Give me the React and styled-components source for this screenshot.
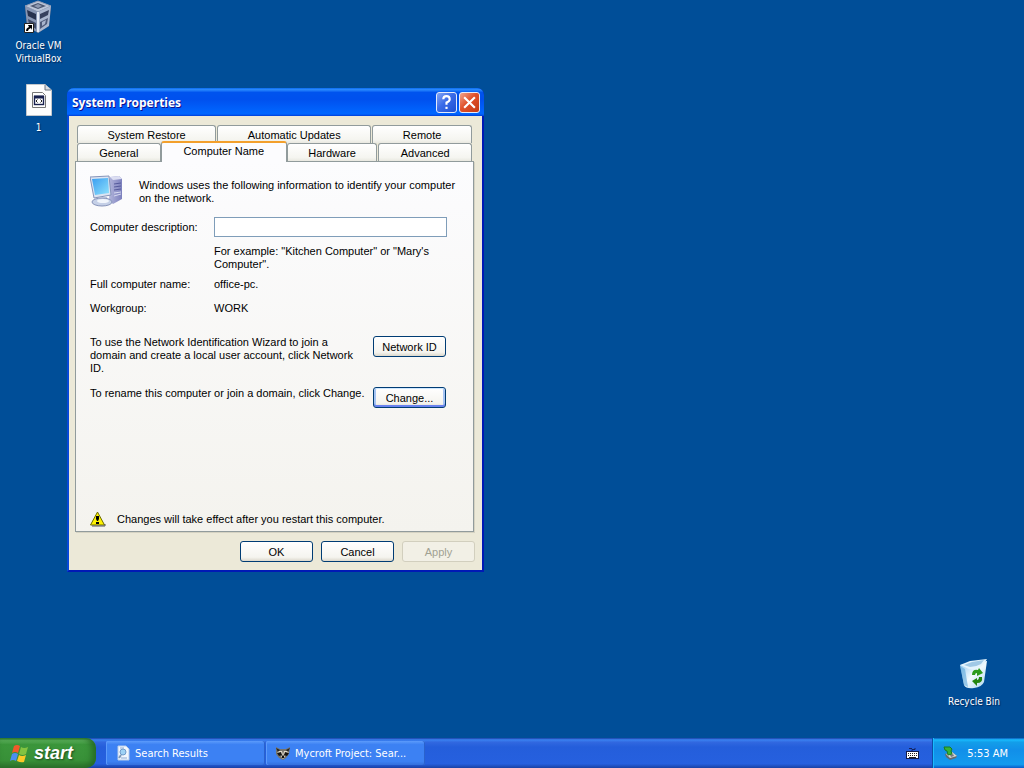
import React, { useState } from 'react';
import styled, { createGlobalStyle } from 'styled-components';

const GlobalStyle = createGlobalStyle`
  * {
    box-sizing: border-box;
  }
  body {
    margin: 0;
    background: #004e98;
    font-family: 'Liberation Sans', Arial, sans-serif;
    font-size: 11px;
    line-height: 13px;
    color: #000;
  }
  p {
    margin: 0;
  }
  svg {
    flex: none;
  }
  button, input {
    font: inherit;
    color: inherit;
  }
`;

const VirtualBoxIcon = () => (
  <svg width='32' height='34' viewBox='0 0 32 34'>
    <path d='M15 1 L28 6 L26 26 L15 33 L4 26 L2 6 Z' fill='#39445f' />
    <path d='M15 1 L28 6 L15 12 L2 6 Z' fill='#bcc6d8' stroke='#8f9db8' />
    <path d='M15 3 L23 6 L15 9 L7 6 Z' fill='#4c5872' />
    <path d='M11 6 L15 4 L19 6 L15 8 Z' fill='#8d99b2' />
    <path d='M2 6 L15 12 V33 L4 26 Z' fill='#8796b3' />
    <path d='M4 10 L13 14 V20 L5 16 Z' fill='#27324e' />
    <path d='M5 19 L13 23 V29 L6 24 Z' fill='#3f4b69' />
    <path d='M28 6 L15 12 V33 L26 26 Z' fill='#aab7cf' />
    <path d='M26 10 L17 14 V19 L25 15 Z' fill='#36415e' />
    <path d='M25 18 L17 22 V29 L24 24 Z' fill='#4d5978' />
    <path d='M23 20 L19 22 V26 L22 24 Z' fill='#a8b4cc' />
    <path d='M15 12 V32' stroke='#e4eaf5' strokeWidth='2' />
    <path d='M1.5 23.5 H10.5 V32.5 H1.5 Z' fill='#fff' stroke='#222' />
    <path d='M3 31 Q3 28 6 27 L5 25 H9 V30 L8 28 Q5 29 5 31 Z' fill='#000' />
  </svg>
);

const FileIcon = () => (
  <svg width='26' height='32' viewBox='0 0 26 32'>
    <path d='M0.5 0.5 H19 L25.5 6 V31.5 H0.5 Z' fill='#fdfdfd' stroke='#c3c7cc' />
    <path d='M19 1 V6 H25' fill='#d9dde2' stroke='#6c7480' />
    <path d='M6.5 8.5 H16.5 L19.5 11.5 V23.5 H6.5 Z' fill='#fff' stroke='#777' />
    <rect x='8.5' y='12.5' width='9' height='8' fill='#fff' stroke='#18204e' strokeWidth='1.4' />
    <path d='M8 13 H18' stroke='#18204e' strokeWidth='3' />
    <path d='M11.5 15.5 L10 17 L11.5 18.5 M14.5 15.5 L16 17 L14.5 18.5' stroke='#222' fill='none' />
  </svg>
);

const RecycleIcon = () => (
  <svg width='32' height='32' viewBox='0 0 32 32'>
    <defs>
      <linearGradient id='bin-side' x1='0' y1='0' x2='1' y2='1'>
        <stop offset='0' stopColor='#8fc7ef' />
        <stop offset='0.5' stopColor='#f2fafe' />
        <stop offset='1' stopColor='#a7d3ec' />
      </linearGradient>
    </defs>
    <path d='M2 7 L29 3 L26 24 Q24 29 16 30 Q8 31 6 27 Z' fill='url(#bin-side)' />
    <path d='M2 7 L12 3 L29 1 L26 6 Q20 13 11 11 Z' fill='#e4f4fd' />
    <path d='M6 7 L14 4 L26 2 L23 6 Q18 9 12 9 Z' fill='#a0c9e6' />
    <path d='M2 8 L6 27 L10 29 L7 11 Z' fill='#5ca6da' opacity='0.6' />
    <path d='M14 17 Q14 11 20 12 L21 10 L25 15 L19 18 L19 15 Q17 15 17 17 Z' fill='#2c9b1d' />
    <path d='M24 19 Q25 25 19 25 L19 28 L14 23 L19 20 L19 22 Q21 22 21 19 Z' fill='#23850f' />
  </svg>
);

const ComputerIcon = () => (
  <svg width='34' height='34' viewBox='0 0 34 34'>
    <defs>
      <linearGradient id='screen' x1='0' y1='0' x2='1' y2='1'>
        <stop offset='0' stopColor='#3a9df0' />
        <stop offset='1' stopColor='#8fe2fd' />
      </linearGradient>
      <linearGradient id='tower' x1='0' y1='0' x2='1' y2='0'>
        <stop offset='0' stopColor='#b3b6dc' />
        <stop offset='1' stopColor='#7c80bd' />
      </linearGradient>
    </defs>
    <path d='M20 2 L29 1 L32 4 V24 L23 29 L19 26 Z' fill='url(#tower)' />
    <path d='M20 2 L29 1 L32 4 L23 5 Z' fill='#dcdef2' />
    <path d='M24 9 L31 8 M24 12 L31 11 M24 15 L31 14' stroke='#565b9c' />
    <path d='M24 18 L31 17 M24 21 L31 19' stroke='#d7daf1' />
    <path d='M0 2 L19 1 L21 20 L4 23 Z' fill='#dce4f2' stroke='#8593b9' />
    <path d='M2 4 L18 3 L19 18 L5 20 Z' fill='url(#screen)' />
    <path d='M10 23 L17 22 L18 27 L11 28 Z' fill='#b2bfdb' />
    <ellipse cx='12' cy='27' rx='10' ry='4' fill='#c5d0e7' stroke='#8794ba' />
    <ellipse cx='13' cy='26' rx='6' ry='2' fill='#f2f6fc' />
  </svg>
);

const WarningIcon = () => (
  <svg width='16' height='16' viewBox='0 0 16 16'>
    <path d='M7.5 1 L14.5 14 H0.5 Z' fill='#fff200' stroke='#6b6b00' strokeLinejoin='round' />
    <path d='M2 15 H15 L15 13' fill='none' stroke='#555' />
    <path d='M6 5 H9 V8 L8 10 H7 L6 8 Z' fill='#000' />
    <rect x='6' y='11' width='3' height='2' fill='#000' />
  </svg>
);

const WindowsFlag = () => (
  <svg width='20' height='19' viewBox='0 0 20 19'>
    <path d='M4 2 Q7 0 10 2 L8 9 Q5 7 2 9 Z' fill='#f1592a' />
    <path d='M11 3 Q14 5 18 3 L16 10 Q13 12 9 10 Z' fill='#83c341' />
    <path d='M2 10 Q5 8 8 10 L6 17 Q3 15 0 17 Z' fill='#4a8ff0' />
    <path d='M9 11 Q12 13 16 11 L14 18 Q11 19 7 17 Z' fill='#fcc927' />
  </svg>
);

const SearchPageIcon = () => (
  <svg width='16' height='16' viewBox='0 0 16 16'>
    <path d='M3 1 H11 L14 4 V15 H3 Z' fill='#f1f7fe' stroke='#b7cdea' />
    <path d='M5 3 H9 M6 13 H12' stroke='#8ba9d2' />
    <circle cx='8' cy='7' r='3' fill='#9ed2f5' stroke='#6f9bcb' />
    <path d='M6 10 L4 13' stroke='#7c98b8' strokeWidth='2' />
  </svg>
);

const RaccoonIcon = () => (
  <svg width='16' height='16' viewBox='0 0 16 16'>
    <path d='M1 2 L5 4 H11 L15 2 L14 9 L11 13 L8 15 L4 13 L1 9 Z' fill='#77746b' />
    <path d='M1 3 L5 5 L3 7 Z M15 3 L11 5 L13 7 Z' fill='#272522' />
    <path d='M4 6 H7 L8 10 L9 6 H12 L14 8 L8 10 L2 8 Z' fill='#e3dccb' />
    <path d='M2 8 L6 7 L7 10 L4 11 Z M14 8 L10 7 L9 10 L12 11 Z' fill='#171513' />
    <path d='M6 11 H10 L8 14 Z' fill='#efe8d7' />
    <rect x='7' y='11' width='2' height='2' fill='#111' />
  </svg>
);

const KeyboardIcon = () => (
  <svg width='16' height='16' viewBox='0 0 16 16'>
    <path d='M8 6 V4.5 H11 V3 M5 3.5 H8' stroke='#14235e' fill='none' />
    <rect x='2.5' y='6.5' width='12' height='7' fill='#fff' stroke='#101b4b' />
    <path d='M4 8.5 H13 M4 10.5 H13' stroke='#222' strokeDasharray='1 1' />
    <path d='M5 12.5 H12' stroke='#222' />
  </svg>
);

const SafelyRemoveIcon = () => (
  <svg width='16' height='16' viewBox='0 0 16 16'>
    <path d='M2 9 L9 7 L14 11 L13 13 L7 15 L3 12 Z' fill='#626a70' />
    <path d='M3 9 L9 7 L14 11 L7 13 Z' fill='#d5d7d2' />
    <path d='M7 10 L10 9 L11 11 L8 12 Z' fill='#757c80' />
    <path d='M1 2 L7 2 L9 4 L8 6 L9 9 L5 10 L4 6 L2 5 Z' fill='#35b438' stroke='#187b24' />
  </svg>
);

const topTabs = [
  { name: 'System Restore', size: 139 },
  { name: 'Automatic Updates', size: 154 },
  { name: 'Remote', size: 99 },
];

const bottomTabs = [
  { name: 'General', size: 83 },
  { name: 'Computer Name', size: 126 },
  { name: 'Hardware', size: 90 },
  { name: 'Advanced', size: 93 },
];

const SystemProperties = () => {
  const [tab, setTab] = useState('Computer Name');
  const [description, setDescription] = useState('');

  const renderTab = ({ name, size }) => (
    <Tab
      key={name}
      type='button'
      role='tab'
      $size={size}
      $active={tab === name}
      aria-selected={tab === name}
      onClick={() => setTab(name)}
    >
      {name}
    </Tab>
  );

  return (
    <Window>
      <TitleBar>
        <h1>System Properties</h1>
        <TitleButton type='button' aria-label='Help'>
          <svg width='15' height='15' viewBox='0 0 14 14'>
            <path d='M4 4 Q4 1 7 1 Q10 1 10 4 Q10 6 7 7 V9' stroke='#fff' strokeWidth='2' fill='none' />
            <rect x='6' y='11' width='2' height='2' fill='#fff' />
          </svg>
        </TitleButton>
        <TitleButton type='button' aria-label='Close' $close>
          <svg width='15' height='15' viewBox='0 0 14 14'>
            <path d='M2 2 L12 12 M12 2 L2 12' stroke='#fff' strokeWidth='2' />
          </svg>
        </TitleButton>
      </TitleBar>
      <WindowBody>
        <TabRow role='tablist'>{topTabs.map(renderTab)}</TabRow>
        <TabRow role='tablist'>{bottomTabs.map(renderTab)}</TabRow>
        <Panel>
          <Intro>
            <ComputerIcon />
            <p>
              Windows uses the following information to identify your computer
              <br />
              on the network.
            </p>
          </Intro>
          <Field>
            <label htmlFor='description'>Computer description:</label>
            <TextBox
              id='description'
              type='text'
              value={description}
              onChange={e => setDescription(e.target.value)}
            />
          </Field>
          <Hint>
            For example: "Kitchen Computer" or "Mary's
            <br />
            Computer".
          </Hint>
          <Field>
            <span>Full computer name:</span>
            <span>office-pc.</span>
          </Field>
          <Field $spaced>
            <span>Workgroup:</span>
            <span>WORK</span>
          </Field>
          <Action>
            <p>
              To use the Network Identification Wizard to join a
              <br />
              domain and create a local user account, click Network
              <br />
              ID.
            </p>
            <Button type='button'>Network ID</Button>
          </Action>
          <Action>
            <p>To rename this computer or join a domain, click Change.</p>
            <Button type='button' $focused>Change...</Button>
          </Action>
          <Warning>
            <WarningIcon />
            <p>Changes will take effect after you restart this computer.</p>
          </Warning>
        </Panel>
        <Footer>
          <Button type='button'>OK</Button>
          <Button type='button'>Cancel</Button>
          <Button type='button' disabled>Apply</Button>
        </Footer>
      </WindowBody>
    </Window>
  );
};

const App = () => (
  <Screen>
    <GlobalStyle />
    <Desktop>
      <Shortcuts>
        <Shortcut href='#virtualbox'>
          <VirtualBoxIcon />
          <span>Oracle VM VirtualBox</span>
        </Shortcut>
        <Shortcut href='#file'>
          <FileIcon />
          <span>1</span>
        </Shortcut>
      </Shortcuts>
      <SystemProperties />
      <BinCorner>
        <Shortcut href='#bin'>
          <RecycleIcon />
          <span>Recycle Bin</span>
        </Shortcut>
      </BinCorner>
    </Desktop>
    <Taskbar>
      <StartButton type='button'>
        <WindowsFlag />
        start
      </StartButton>
      <Tasks>
        <TaskButton type='button'>
          <SearchPageIcon />
          <span>Search Results</span>
        </TaskButton>
        <TaskButton type='button'>
          <RaccoonIcon />
          <span>Mycroft Project: Sear...</span>
        </TaskButton>
      </Tasks>
      <LanguageBar>
        <KeyboardIcon />
      </LanguageBar>
      <Tray>
        <SafelyRemoveIcon />
        <span>5:53 AM</span>
      </Tray>
    </Taskbar>
  </Screen>
);

export default App;

const Screen = styled.div`
  display: flex;
  flex-direction: column;
  height: 100vh;
  overflow: hidden;
`;

const Desktop = styled.main`
  position: relative;
  flex: 1;
  min-height: 0;
`;

const Shortcuts = styled.div`
  display: flex;
  flex-direction: column;
  gap: 19px;
  width: 77px;
`;

const BinCorner = styled.div`
  position: absolute;
  right: 12px;
  bottom: 30px;
  width: 76px;
`;

const Shortcut = styled.a`
  display: flex;
  flex-direction: column;
  align-items: center;
  gap: 5px;
  color: #fff;
  font-family: 'DejaVu Sans Condensed', 'DejaVu Sans', sans-serif;
  font-size: 10px;
  text-align: center;
  text-decoration: none;
  text-shadow: 1px 1px 1px #00285a;
`;

const Window = styled.section`
  position: absolute;
  top: 88px;
  left: 67px;
  width: 417px;
  border: 2px solid;
  border-top: none;
  border-color: #0831d9 #0019b5 #0019b5 #0848d8;
  border-radius: 7px 7px 0 0;
  background: #0055e5;
`;

const TitleBar = styled.header`
  display: flex;
  align-items: center;
  gap: 2px;
  height: 28px;
  margin: 0 -2px;
  padding: 1px 4px 0 5px;
  border-radius: 7px 7px 0 0;
  background: linear-gradient(#0a6cf0 0, #2a8aff 6%, #0053ee 16%, #0050ee 40%, #0066ff 88%, #0066ff 93%, #003dd7 100%);

  h1 {
    flex: 1;
    margin: 0;
    color: #fff;
    font-family: 'Open Sans', 'Noto Sans', sans-serif;
    font-size: 12px;
    font-weight: bold;
    line-height: 16px;
    text-shadow: 1px 1px #0f1089;
  }
`;

const TitleButton = styled.button`
  display: flex;
  align-items: center;
  justify-content: center;
  width: 21px;
  height: 21px;
  padding: 0;
  border: 1px solid #e4ebfb;
  border-radius: 3px;
  background: ${props =>
    props.$close
      ? 'linear-gradient(135deg, #f0a58c, #e0502a 45%, #c43a14)'
      : 'linear-gradient(135deg, #84a5f5, #3a6be8 45%, #1e50d2)'};
`;

const WindowBody = styled.div`
  padding: 9px 7px 8px 6px;
  background: #ece9d8;
`;

const TabRow = styled.div`
  display: flex;
  gap: 1px;
  height: 18px;
  padding: 0 3px 0 2px;
`;

const Tab = styled.button`
  position: relative;
  flex: ${props => props.$size} 1 0;
  height: 18px;
  margin: 0;
  padding: 2px 0 0;
  border: 1px solid #919b9c;
  border-bottom: none;
  border-radius: 3px 3px 0 0;
  background: linear-gradient(#fff, #f5f5f0 80%, #e9e8e0);

  ${props => props.$active && `
    z-index: 1;
    height: 21px;
    margin: -2px -1px 0;
    padding: 0 0 2px;
    border-top: 2px solid #f3a02c;
    background: #fcfcfe;
  `}
`;

const Panel = styled.form`
  display: flex;
  flex-direction: column;
  min-height: 371px;
  margin-right: 1px;
  padding: 13px 26px 4px 14px;
  border: 1px solid #919b9c;
  background: linear-gradient(#fcfcfe, #f4f3ee);
  box-shadow: 1px 1px #d5d2c2;
`;

const Intro = styled.div`
  display: flex;
  gap: 15px;
  height: 34px;
  margin-bottom: 8px;
  white-space: nowrap;

  p {
    padding-top: 4px;
  }
`;

const Field = styled.div`
  display: grid;
  grid-template-columns: 124px 1fr;
  align-items: center;
  margin-bottom: ${props => (props.$spaced ? '21px' : '11px')};
`;

const TextBox = styled.input`
  width: 100%;
  height: 20px;
  padding: 2px;
  border: 1px solid #7f9db9;
  background: #fff;
`;

const Hint = styled.p`
  margin: -3px 0 7px 124px;
`;

const Action = styled.div`
  display: flex;
  align-items: flex-start;
  justify-content: space-between;
  margin-bottom: 12px;
  padding-right: 1px;
  white-space: nowrap;
`;

const Button = styled.button`
  flex: none;
  width: 73px;
  height: 21px;
  padding: 1px 0 0;
  border: 1px solid #003c74;
  border-radius: 3px;
  background: linear-gradient(#fff, #f5f4ef 80%, #dcd8cc);
  ${props => props.$focused && 'box-shadow: inset 0 1px #cee7ff, inset 0 -2px #6982ee, inset 2px 0 #a6c4f3, inset -2px 0 #a6c4f3;'}

  &:disabled {
    border-color: #d2cfbe;
    background: #f2f0e6;
    color: #a1a192;
  }
`;

const Warning = styled.div`
  display: flex;
  align-items: center;
  gap: 11px;
  margin-top: auto;
`;

const Footer = styled.div`
  display: flex;
  justify-content: flex-end;
  gap: 8px;
  margin-top: 9px;
`;

const Taskbar = styled.footer`
  display: flex;
  height: 30px;
  background: linear-gradient(#1941a5 0, #3a82f2 6%, #3168e0 14%, #245edb 30%, #2660df 86%, #1941a5 100%);
  color: #fff;
  font-family: 'DejaVu Sans Condensed', 'DejaVu Sans', sans-serif;
  font-size: 11px;
`;

const StartButton = styled.button`
  display: flex;
  align-items: center;
  gap: 4px;
  width: 96px;
  padding: 0 0 0 10px;
  border: none;
  border-radius: 0 10px 10px 0;
  background: linear-gradient(#2f7d2f 0, #5cb35c 8%, #3b963b 22%, #389038 75%, #2c722c 100%);
  box-shadow: inset -4px 0 6px #266b26;
  font-family: 'Liberation Sans', Arial, sans-serif;
  font-size: 18px;
  font-style: italic;
  font-weight: bold;
  line-height: 20px;
  text-shadow: 1px 1px 2px #1c4a1c;
`;

const Tasks = styled.nav`
  display: flex;
  flex: 1;
  gap: 1px;
  padding: 3px 0 3px 10px;
`;

const TaskButton = styled.button`
  display: flex;
  align-items: center;
  gap: 4px;
  width: 159px;
  padding: 0 9px;
  border: none;
  border-radius: 2px;
  background: linear-gradient(#5c9bfb 0, #3c81f3 15%, #3c81f3 85%, #3470dc 100%);
  box-shadow: inset 1px 0 #5c9bfb, inset -1px 0 #2a62cc;
  white-space: nowrap;
`;

const LanguageBar = styled.div`
  display: flex;
  align-items: center;
  padding-right: 12px;
`;

const Tray = styled.div`
  display: flex;
  align-items: center;
  justify-content: space-between;
  width: 92px;
  padding: 0 16px 0 10px;
  border-left: 1px solid #0c4fa8;
  background: linear-gradient(#0c59b9 0, #18bbff 6%, #139ee9 14%, #118fe9 40%, #139bee 88%, #095bc9 100%);
  box-shadow: inset 1px 0 #18bbff;
`;
